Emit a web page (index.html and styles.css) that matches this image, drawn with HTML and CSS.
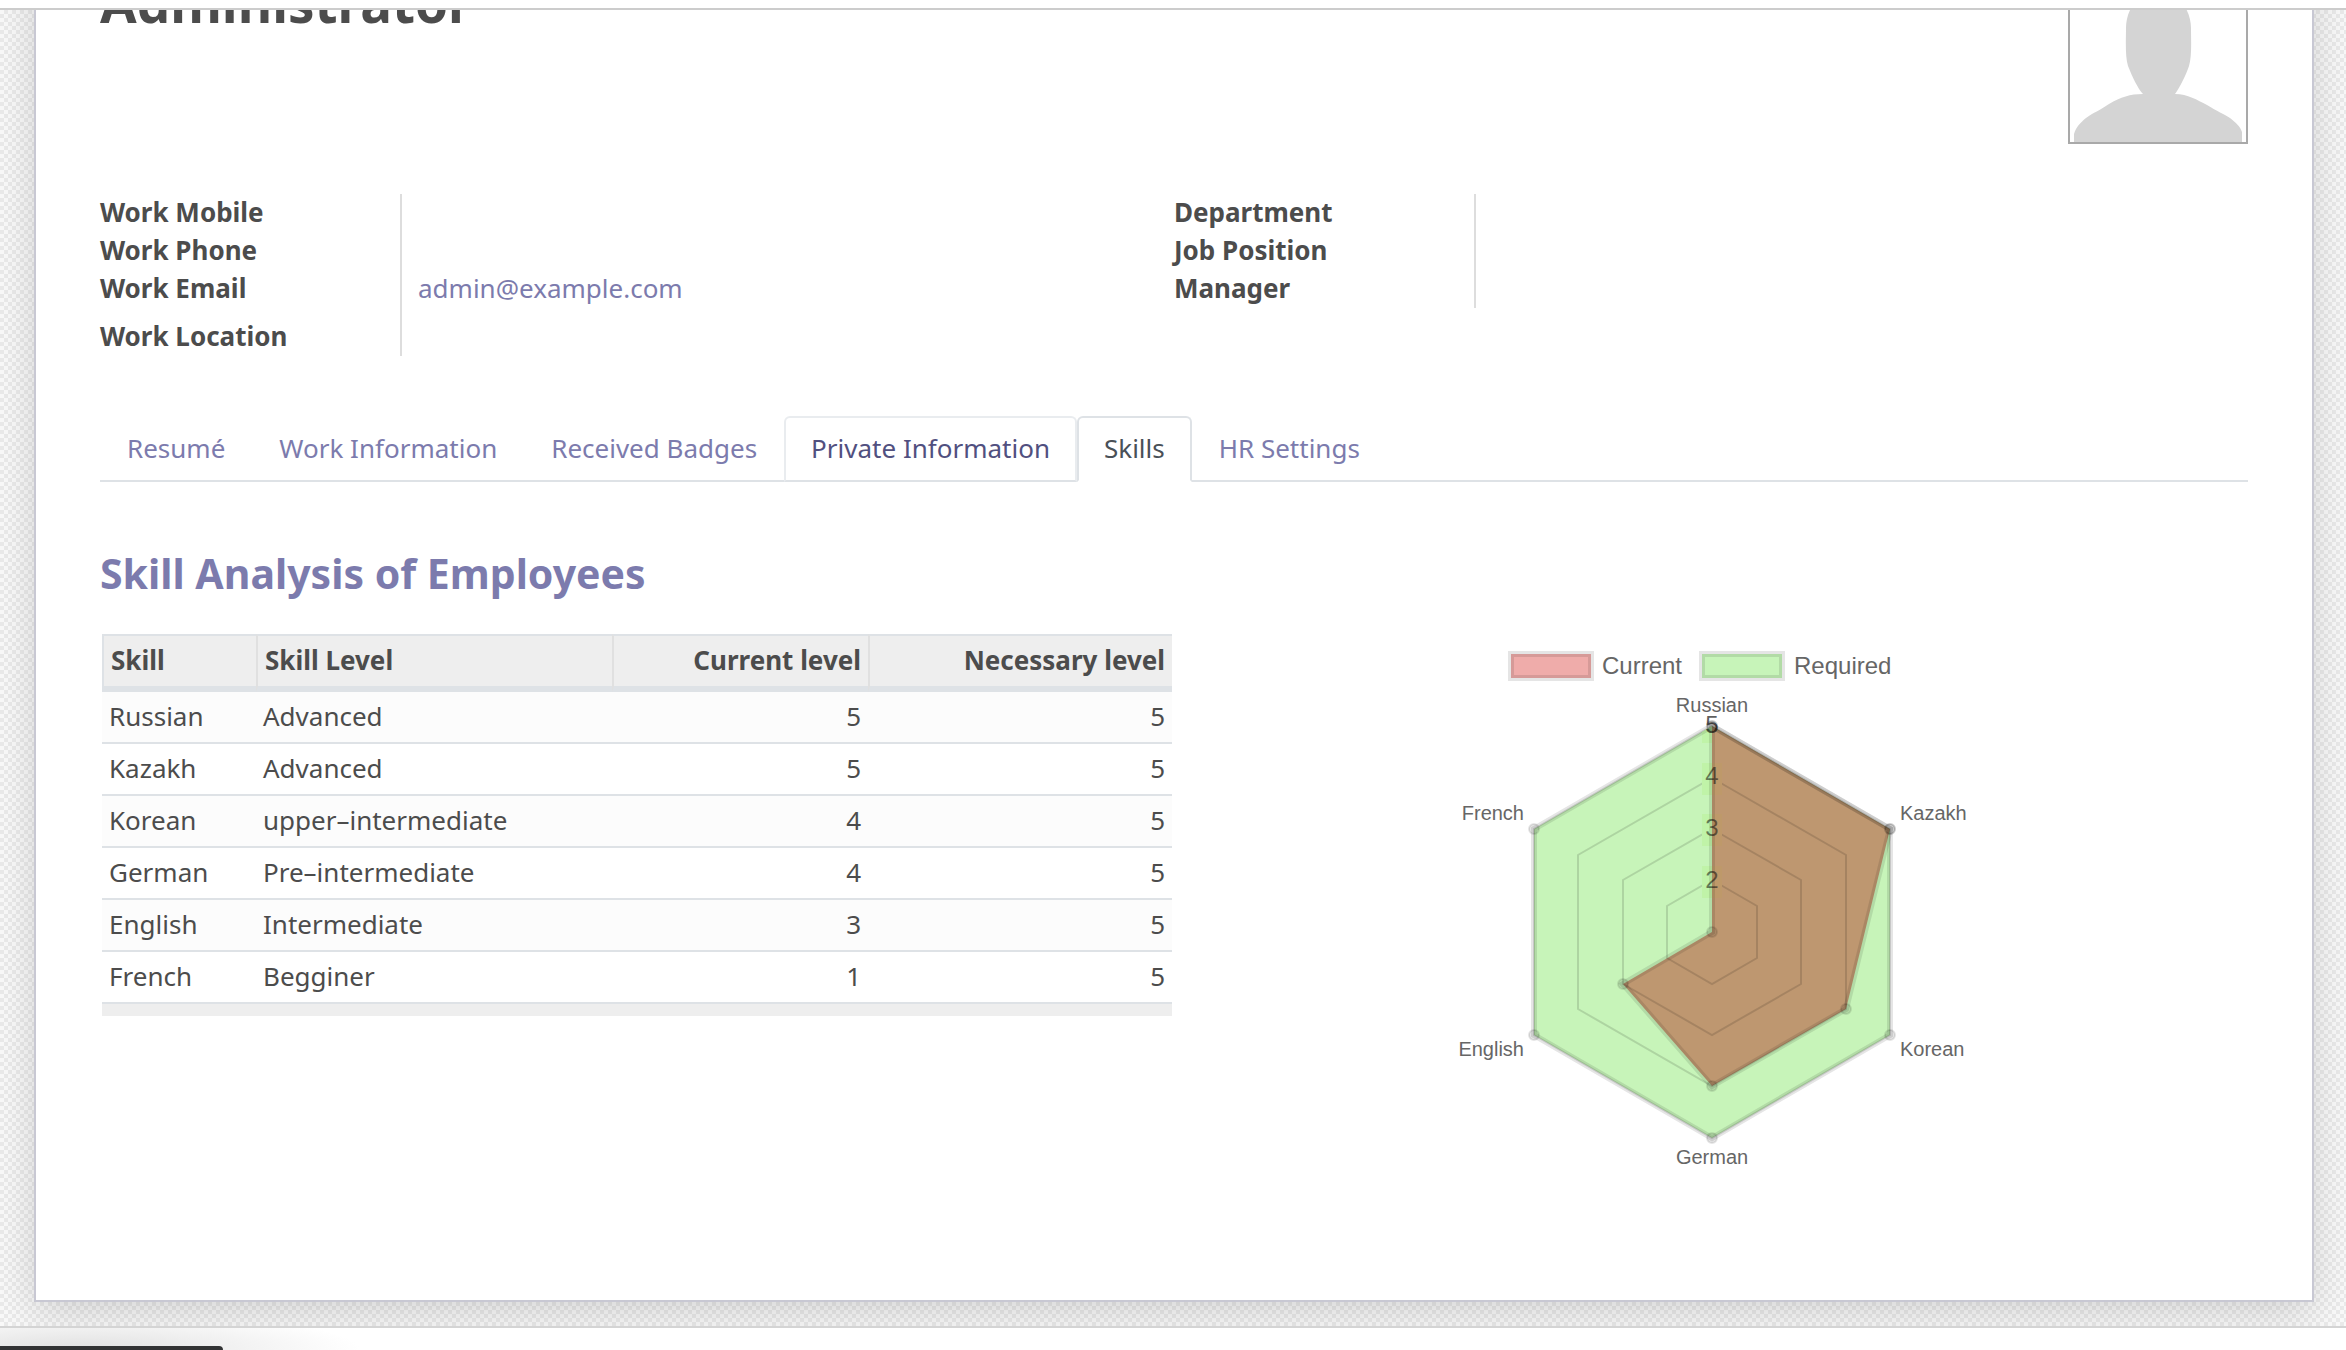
FILE: index.html
```html
<!DOCTYPE html>
<html lang="en">
<head>
<meta charset="utf-8">
<title>Administrator - Employees</title>
<link rel="stylesheet" href="styles.css">
</head>
<body>
<div class="control-panel"></div>
<main class="form-view">
  <article class="sheet">
    <header class="profile">
      <h1 class="profile-name">Administrator</h1>
      <svg class="avatar" viewBox="0 0 180 180" role="img" aria-label="Employee photo">
        <rect x="1" y="1" width="178" height="178" fill="#fff" stroke="#a9a9a9" stroke-width="2"/>
        <path fill="#d4d4d4" d="M6 178V170C8 163 12 159 18 154C26 148 31 147 41 140C53 133 62 130 75 130C70 125 64 112 60 102C57 92 58 76 58 64C58 50 66 28 90 28C114 28 123 50 123 64C123 76 124 92 121 102C118 111 112 123 107 130C120 130 129 136 139 141C150 148 154 149 162 154C168 159 172 162 174 168V178Z"/>
      </svg>
    </header>

    <section class="groups">
      <dl class="group">
        <dt>Work Mobile</dt><dd></dd>
        <dt>Work Phone</dt><dd></dd>
        <dt>Work Email</dt><dd><a href="mailto:admin@example.com">admin@example.com</a></dd>
        <dt class="spaced">Work Location</dt><dd></dd>
      </dl>
      <dl class="group">
        <dt>Department</dt><dd></dd>
        <dt>Job Position</dt><dd></dd>
        <dt>Manager</dt><dd></dd>
      </dl>
    </section>

    <nav class="tabs">
      <a class="tab" href="#resume">Resumé</a>
      <a class="tab" href="#work">Work Information</a>
      <a class="tab" href="#badges">Received Badges</a>
      <a class="tab tab-hover" href="#private">Private Information</a>
      <a class="tab tab-active" href="#skills">Skills</a>
      <a class="tab" href="#settings">HR Settings</a>
    </nav>

    <h2 class="section-title">Skill Analysis of Employees</h2>

    <section class="analysis">
      <table class="skills">
        <colgroup><col class="col-skill"><col class="col-level"><col class="col-current"><col></colgroup>
        <thead>
          <tr><th>Skill</th><th>Skill Level</th><th class="num">Current level</th><th class="num">Necessary level</th></tr>
        </thead>
        <tbody>
          <tr><td>Russian</td><td>Advanced</td><td class="num">5</td><td class="num">5</td></tr>
          <tr><td>Kazakh</td><td>Advanced</td><td class="num">5</td><td class="num">5</td></tr>
          <tr><td>Korean</td><td>upper–intermediate</td><td class="num">4</td><td class="num">5</td></tr>
          <tr><td>German</td><td>Pre–intermediate</td><td class="num">4</td><td class="num">5</td></tr>
          <tr><td>English</td><td>Intermediate</td><td class="num">3</td><td class="num">5</td></tr>
          <tr><td>French</td><td>Begginer</td><td class="num">1</td><td class="num">5</td></tr>
        </tbody>
        <tfoot><tr><td colspan="4"></td></tr></tfoot>
      </table>

      <svg class="radar" viewBox="-1 2 600 560" role="img" aria-label="Current and required skill levels">
        <g class="legend">
          <rect x="99" y="22" width="80" height="24" fill="#efacaa"/>
          <rect x="99" y="22" width="80" height="24" class="outline"/>
          <text x="190" y="42">Current</text>
          <rect x="290" y="22" width="80" height="24" fill="#c7f4b9"/>
          <rect x="290" y="22" width="80" height="24" class="outline"/>
          <text x="382" y="42">Required</text>
        </g>
        <polygon fill="#c7f4b9" points="300,94 478,197 478,403 300,506 122,403 122,197"/>
        <polygon fill="#be9770" points="300,94 478,197 434,377 300,454 211,352 300,300"/>
        <g class="grid">
          <polygon points="300,248 345,274 345,326 300,352 255,326 255,274"/>
          <polygon points="300,197 389,248 389,352 300,403 211,352 211,248"/>
          <polygon points="300,146 434,223 434,377 300,454 166,377 166,223"/>
          <polygon points="300,94 478,197 478,403 300,506 122,403 122,197"/>
        </g>
        <g class="backdrop">
          <path fill="#c0f3a8" d="M290 100L300 94V111H290Z"/>
          <rect x="290" y="131" width="10" height="32" fill="#c0f3a8"/>
          <rect x="290" y="182" width="10" height="32" fill="#c0f3a8"/>
          <rect x="290" y="234" width="10" height="32" fill="#c0f3a8"/>
          <rect x="300" y="131" width="10" height="32" fill="#be996a"/>
          <rect x="300" y="182" width="10" height="32" fill="#be996a"/>
          <rect x="300" y="234" width="10" height="32" fill="#be996a"/>
        </g>
        <polygon class="outline" points="300,94 478,197 478,403 300,506 122,403 122,197"/>
        <polygon class="outline" points="300,94 478,197 434,377 300,454 211,352 300,300"/>
        <g class="points">
          <circle cx="300" cy="94" r="5"/><circle cx="478" cy="197" r="5"/><circle cx="478" cy="403" r="5"/>
          <circle cx="300" cy="506" r="5"/><circle cx="122" cy="403" r="5"/><circle cx="122" cy="197" r="5"/>
          <circle cx="300" cy="94" r="5"/><circle cx="478" cy="197" r="5"/><circle cx="434" cy="377" r="5"/>
          <circle cx="300" cy="454" r="5"/><circle cx="211" cy="352" r="5"/><circle cx="300" cy="300" r="5"/>
        </g>
        <g class="ticks">
          <text x="300" y="101" class="tick-top">5</text><text x="300" y="152">4</text>
          <text x="300" y="204">3</text><text x="300" y="256">2</text>
        </g>
        <g class="labels">
          <text x="300" y="80" class="mid">Russian</text>
          <text x="488" y="188">Kazakh</text>
          <text x="488" y="424">Korean</text>
          <text x="300" y="532" class="mid">German</text>
          <text x="112" y="424" class="end">English</text>
          <text x="112" y="188" class="end">French</text>
        </g>
      </svg>
    </section>
  </article>
</main>
<footer class="chatter"></footer>
<div class="status-bubble"></div>
</body>
</html>
```
FILE: styles.css
```css
* { box-sizing: border-box; }

html, body { height: 100%; }

body {
  margin: 0;
  display: flex;
  flex-direction: column;
  overflow: hidden;
  background: #fff;
  color: #4c4c4c;
  font: 26px/38px "Noto Sans", "Open Sans", sans-serif;
}

a { color: #7c7bad; text-decoration: none; }

.control-panel {
  flex: none;
  height: 10px;
  border-bottom: 2px solid #ccc;
}

/* The form is shown scrolled part of the way down. */
.form-view {
  flex: none;
  overflow: hidden;
  padding: 0 32px 24px 34px;
  border-bottom: 2px solid #d4d4d4;
  background: repeating-conic-gradient(#eaeaea 0 25%, #f9f9f9 0 50%) 0 0 / 8px 8px;
}

.sheet {
  margin-top: -102px;
  padding: 54px 64px 106px;
  border: 2px solid #c8c8d3;
  background: #fff;
  box-shadow: 0 10px 40px rgba(0, 0, 0, .15);
}

.profile {
  display: flex;
  justify-content: space-between;
  align-items: flex-start;
}

.profile-name { margin: 0; font-size: 53px; line-height: 78px; }

.avatar { width: 180px; height: 180px; }

.groups {
  display: grid;
  grid-template-columns: 1fr 1fr;
  align-items: start;
  margin-top: 50px;
}

.group {
  display: grid;
  grid-template-columns: 300px 1fr;
  margin: 0;
  background: linear-gradient(#ddd, #ddd) 300px 0 / 2px 100% no-repeat;
  line-height: 36px;
}

.group dt { min-height: 38px; font-weight: bold; }
.group dd { margin: 0; padding-left: 18px; }
.group dt.spaced { min-height: 48px; padding-top: 10px; }

.tabs {
  display: flex;
  margin-top: 60px;
  border-bottom: 2px solid #dee2e6;
}

.tab {
  margin-bottom: -2px;
  padding: 11px 25px 13px;
  border: 2px solid transparent;
  border-radius: 6px 6px 0 0;
}

.tab-hover { border-color: #e9ecef #e9ecef #dee2e6; color: #51507f; }
.tab-active { border-color: #dee2e6 #dee2e6 #fff; background: #fff; color: #495057; }

.section-title {
  margin: 64px 0 34px;
  color: #7c7bad;
  font-size: 41px;
  line-height: 54px;
}

.analysis {
  display: grid;
  grid-template-columns: 1fr 1fr;
  align-items: start;
}

.skills {
  width: calc(100% - 4px);
  margin-left: 2px;
  border-collapse: separate;
  border-spacing: 0;
  table-layout: fixed;
}

.col-skill { width: 154px; }
.col-level { width: 356px; }
.col-current { width: 256px; }

.skills th {
  padding: 5px 7px 7px;
  border: 0 solid #dee2e6;
  border-width: 2px 0 6px 2px;
  background: #eee;
  text-align: left;
}

.skills th + th { border-left-color: #e0e0e0; }

.skills td {
  padding: 5px 7px 7px;
  border-bottom: 2px solid #dee2e6;
}

.skills tbody tr:nth-child(odd) { background: #fcfcfc; }
.skills .num { text-align: right; }

.skills tfoot td {
  height: 12px;
  padding: 0;
  border: 0;
  background: #eee;
}

.radar {
  width: 600px;
  height: 560px;
  justify-self: center;
  font-family: "Liberation Sans", Arial, sans-serif;
}

.radar text { fill: #666; }
.legend text { font-size: 24px; }
.labels text { font-size: 20px; }
.labels .mid { text-anchor: middle; }
.labels .end { text-anchor: end; }
.radar .ticks text { font-size: 24px; text-anchor: middle; fill: #000; fill-opacity: .5; }
.radar .ticks .tick-top { fill-opacity: .65; }
.outline { fill: none; stroke: #000; stroke-opacity: .1; stroke-width: 6px; }
.grid polygon { fill: none; stroke: #000; stroke-opacity: .13; stroke-width: 2px; }
.points circle { fill: #000; fill-opacity: .1; stroke: #000; stroke-opacity: .1; stroke-width: 2px; }

.chatter {
  flex: 1;
  background: radial-gradient(ellipse 280px 40px at 80px 100%, #e0e0e0, #fff);
}

.status-bubble {
  position: fixed;
  left: 0;
  bottom: 0;
  width: 223px;
  height: 4px;
  border-radius: 0 4px 0 0;
  background: #323334;
}
```
